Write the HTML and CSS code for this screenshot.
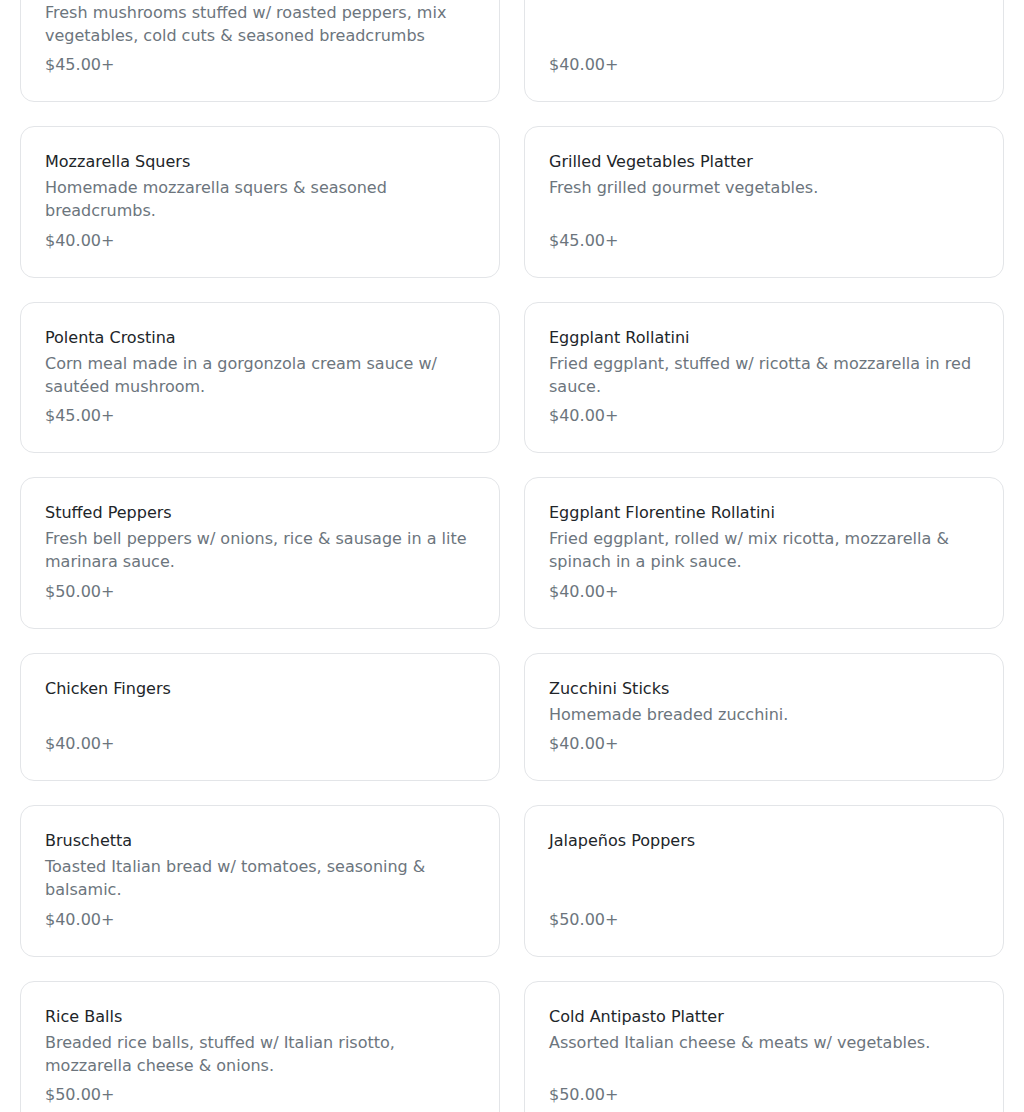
FILE: index.html
```html
<!DOCTYPE html>
<html lang="en">
<head>
<meta charset="utf-8">
<title>Menu</title>
<link rel="stylesheet" href="styles.css">
</head>
<body>
<div class="menu">
  <div class="card">
    <div class="title">Stuffed Mushrooms</div>
    <div class="desc">Fresh mushrooms stuffed w/ roasted peppers, mix vegetables, cold cuts &amp; seasoned breadcrumbs</div>
    <div class="price">$45.00+</div>
  </div>
  <div class="card">
    <div class="title">Fried Calamari</div>
    <div class="price">$40.00+</div>
  </div>
  <div class="card">
    <div class="title">Mozzarella Squers</div>
    <div class="desc">Homemade mozzarella squers &amp; seasoned breadcrumbs.</div>
    <div class="price">$40.00+</div>
  </div>
  <div class="card">
    <div class="title">Grilled Vegetables Platter</div>
    <div class="desc">Fresh grilled gourmet vegetables.</div>
    <div class="price">$45.00+</div>
  </div>
  <div class="card">
    <div class="title">Polenta Crostina</div>
    <div class="desc">Corn meal made in a gorgonzola cream sauce w/ sautéed mushroom.</div>
    <div class="price">$45.00+</div>
  </div>
  <div class="card">
    <div class="title">Eggplant Rollatini</div>
    <div class="desc">Fried eggplant, stuffed w/ ricotta &amp; mozzarella in red sauce.</div>
    <div class="price">$40.00+</div>
  </div>
  <div class="card">
    <div class="title">Stuffed Peppers</div>
    <div class="desc">Fresh bell peppers w/ onions, rice &amp; sausage in a lite marinara sauce.</div>
    <div class="price">$50.00+</div>
  </div>
  <div class="card">
    <div class="title">Eggplant Florentine Rollatini</div>
    <div class="desc">Fried eggplant, rolled w/ mix ricotta, mozzarella &amp; spinach in a pink sauce.</div>
    <div class="price">$40.00+</div>
  </div>
  <div class="card">
    <div class="title">Chicken Fingers</div>
    <div class="price">$40.00+</div>
  </div>
  <div class="card">
    <div class="title">Zucchini Sticks</div>
    <div class="desc">Homemade breaded zucchini.</div>
    <div class="price">$40.00+</div>
  </div>
  <div class="card">
    <div class="title">Bruschetta</div>
    <div class="desc">Toasted Italian bread w/ tomatoes, seasoning &amp; balsamic.</div>
    <div class="price">$40.00+</div>
  </div>
  <div class="card">
    <div class="title">Jalapeños Poppers</div>
    <div class="price">$50.00+</div>
  </div>
  <div class="card">
    <div class="title">Rice Balls</div>
    <div class="desc">Breaded rice balls, stuffed w/ Italian risotto, mozzarella cheese &amp; onions.</div>
    <div class="price">$50.00+</div>
  </div>
  <div class="card">
    <div class="title">Cold Antipasto Platter</div>
    <div class="desc">Assorted Italian cheese &amp; meats w/ vegetables.</div>
    <div class="price">$50.00+</div>
  </div>
</div>
</body>
</html>
```

FILE: styles.css
```css
html, body {
  margin: 0;
  padding: 0;
  background: #ffffff;
  font-family: "DejaVu Sans", "Liberation Sans", sans-serif;
  font-size: 16px;
  color: #212529;
  overflow: hidden;
}

.menu {
  display: grid;
  grid-template-columns: 1fr 1fr;
  gap: 24px;
  padding: 0 20px 40px;
  margin-top: -49.5px;
}

.card {
  display: flex;
  flex-direction: column;
  border: 1px solid #e3e5e8;
  border-radius: 14px;
  padding: 24px;
  background: #ffffff;
}

.title {
  line-height: 21px;
  color: #212529;
}

.desc {
  margin-top: 4px;
  line-height: 23px;
  color: #6c757d;
}

.price {
  margin-top: auto;
  padding-top: 6.5px;
  line-height: 24px;
  color: #6c757d;
}
```
